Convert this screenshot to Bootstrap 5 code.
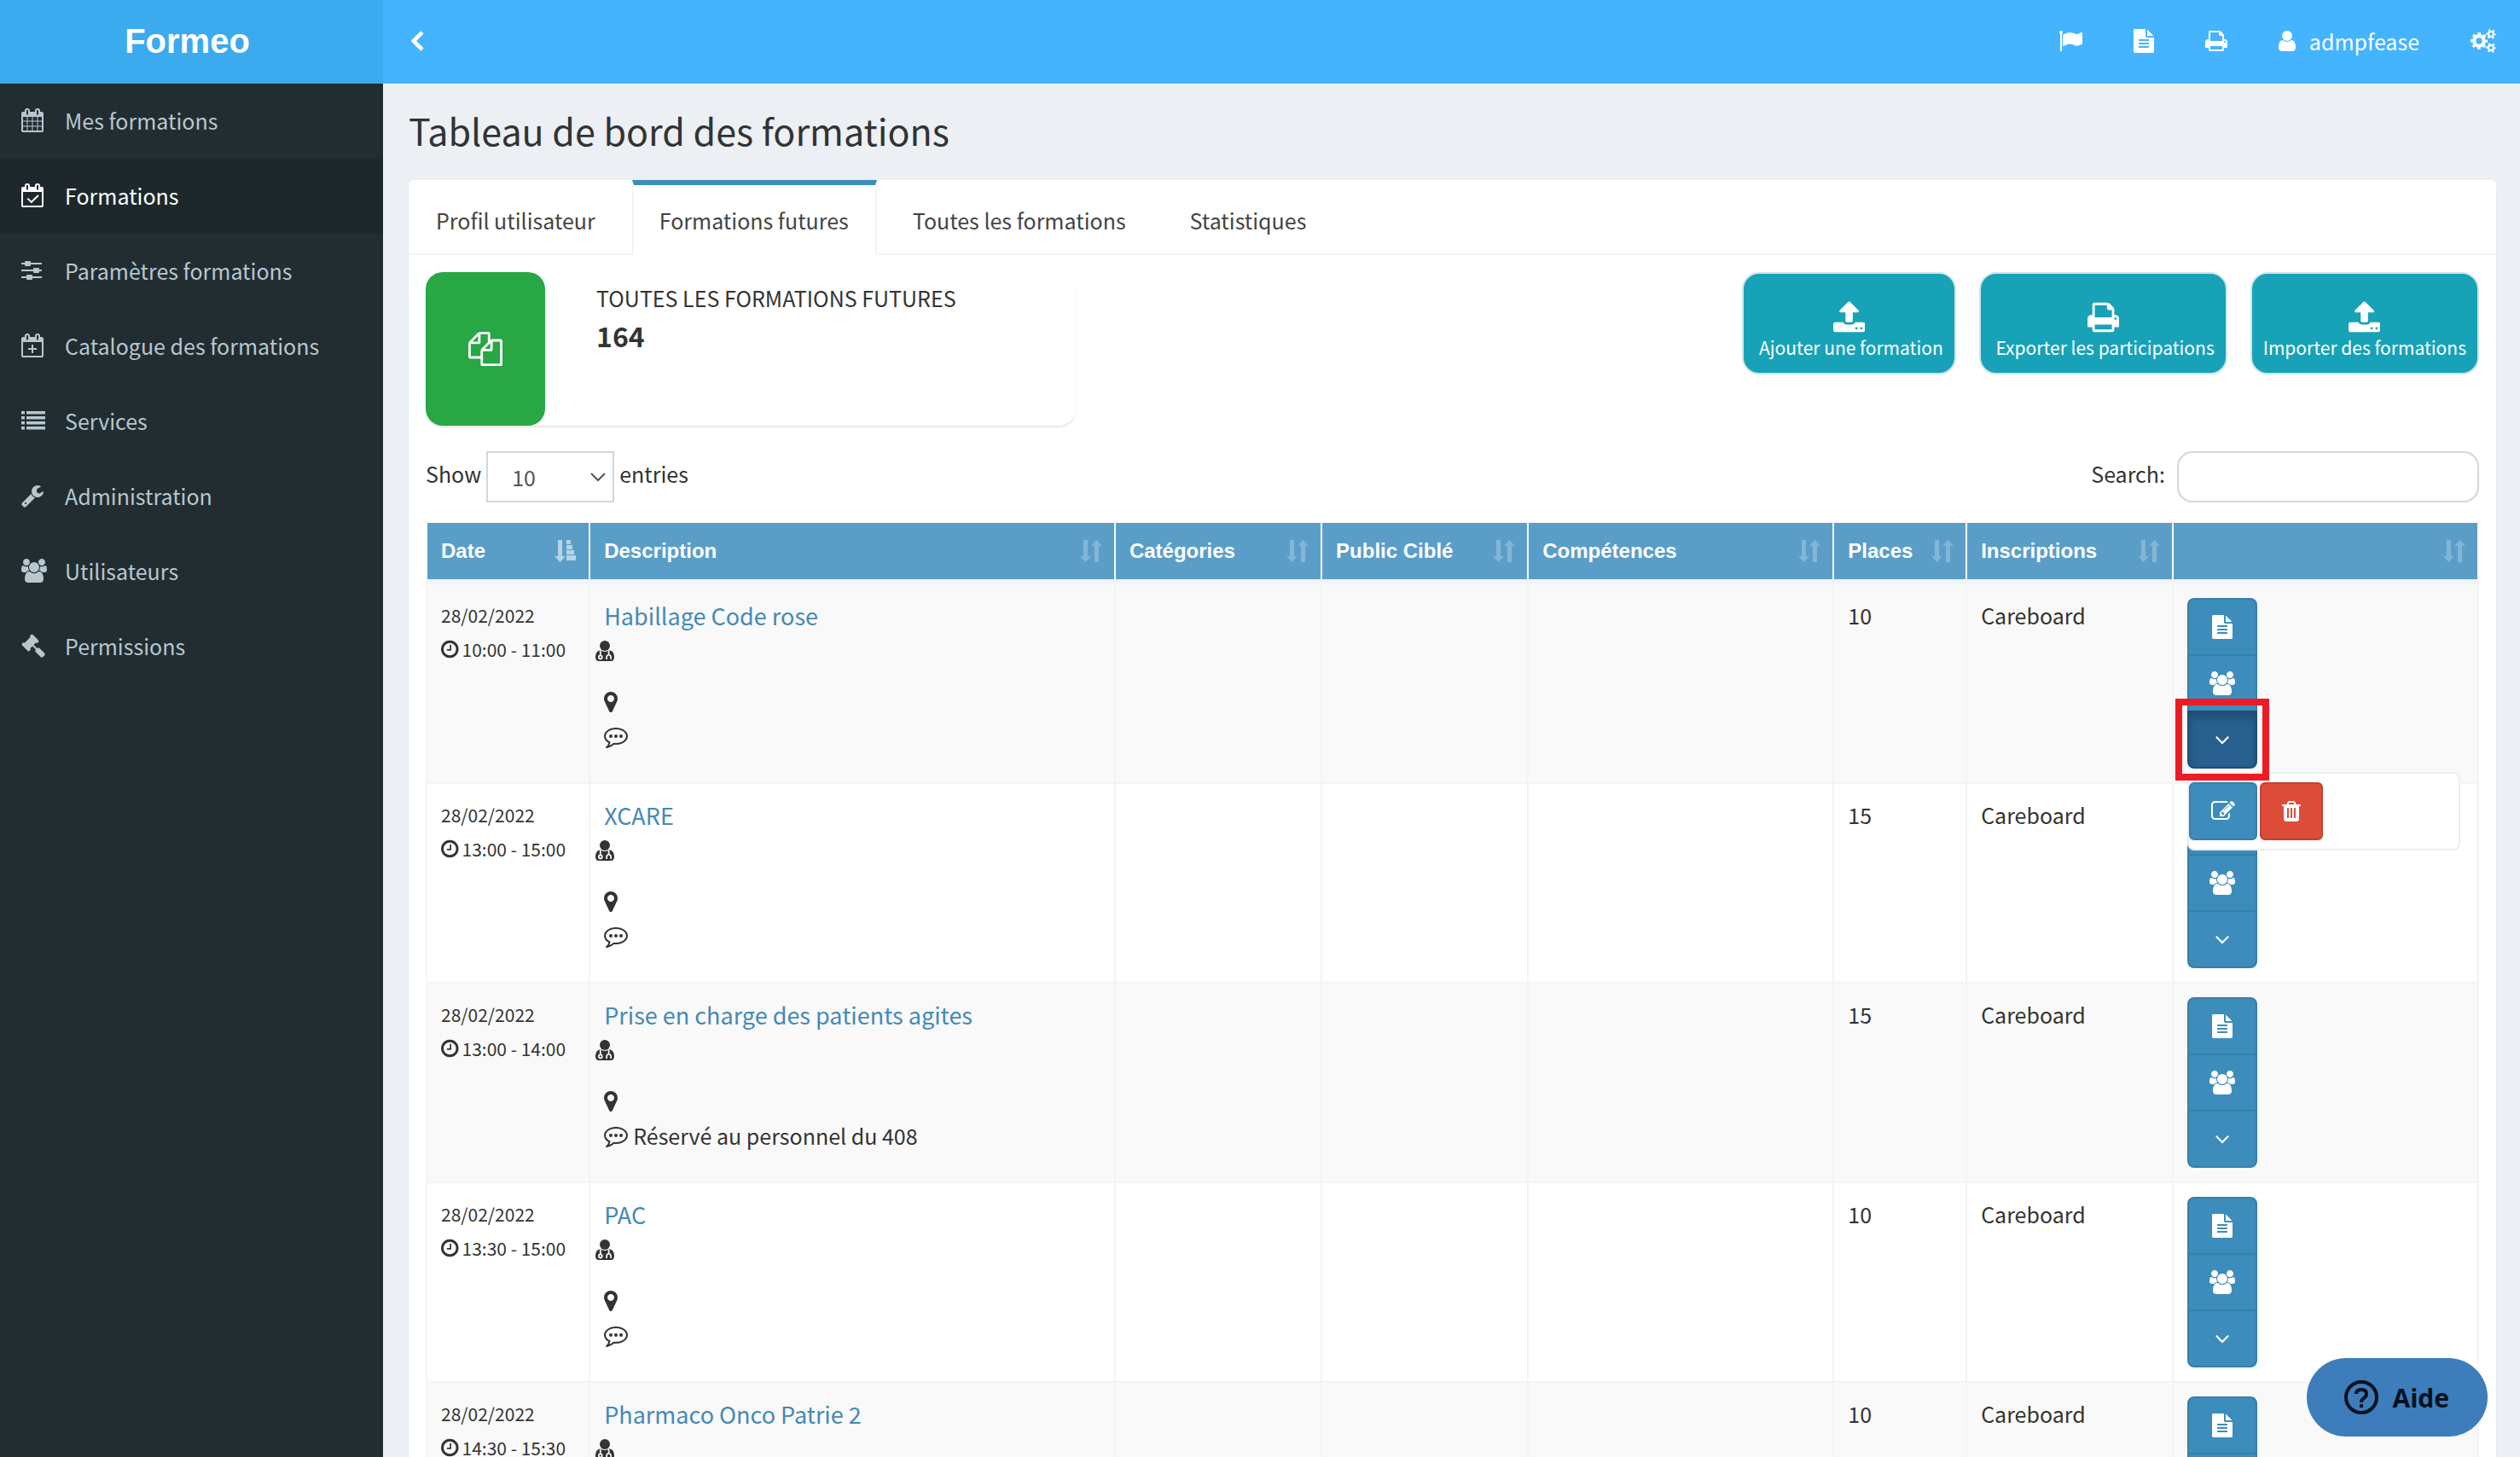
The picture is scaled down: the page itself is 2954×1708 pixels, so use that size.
<!DOCTYPE html>
<html lang="fr">
<head>
  <meta charset="UTF-8">
  <title>Formeo – Tableau de bord des formations</title>
  <meta name="viewport" content="width=device-width, initial-scale=1">
  <link href="https://cdn.jsdelivr.net/npm/bootstrap@5.3.0/dist/css/bootstrap.min.css" rel="stylesheet">
  <style>
    body {
      font-family: "Noto Sans CJK SC", "Open Sans", sans-serif;
      font-size: 25px;
      line-height: 40px;
      color: #333;
      background-color: #ecf0f5;
    }
    a { text-decoration: none; }
    .fa {
      height: 28px;
      width: auto;
      fill: currentColor;
      flex: none;
      display: block;
    }
    .fa-sm { height: 24px; }
    .fa-lg { height: 40px; }

    /* top bar */
    .topbar {
      height: 98px;
      padding-bottom: 2px;
      background: #44b4ff;
    }
    .brand-box {
      width: 449px;
      height: 98px;
      margin-bottom: -2px;
      padding: 0 10px 2px 0;
      background: #3caaef;
      font: bold 40px "Liberation Sans", sans-serif;
    }
    .top-links {
      gap: 60px;
      padding-right: 28px;
    }
    .top-links a, .toggle-btn { color: #fff; }
    .toggle-btn {
      margin-left: 33px;
      background: none;
      border: 0;
      padding: 0;
    }

    /* sidebar */
    .sidebar {
      width: 449px;
      background: #222d32;
    }
    .sidebar a {
      height: 88px;
      padding: 0 0 2px 25px;
      color: #b8c7ce;
    }
    .sidebar a.active {
      background: #1e282c;
      color: #fff;
    }
    .side-icon { width: 51px; }

    /* content */
    .content-area { padding: 24px 28px 0 30px; }
    h1 {
      font-size: 43px;
      line-height: 60px;
      font-weight: 400;
      margin-bottom: 29px;
    }
    .tab-box {
      background: #fff;
      border-radius: 6px;
      box-shadow: 0 2px 2px rgba(0,0,0,.1);
    }
    .tab-links {
      gap: 10px;
      border-bottom: 2px solid #f4f4f4;
      --bs-nav-tabs-border-radius: 0;
    }
    .tab-links .nav-link {
      padding: 21px 31px 0 30px;
      border: solid transparent;
      border-width: 6px 2px 2px;
      margin-bottom: -2px;
      color: #444;
      height: 88px;
    }
    .tab-links .nav-link.active {
      border-color: #3c8dbc #f4f4f4 #fff;
      color: #444;
    }
    .tab-body { padding: 20px; }
    .info-row { --bs-gutter-x: 60px; margin-bottom: 30px; }
    .info-tile {
      height: 180px;
      border-radius: 20px;
      box-shadow: 0 2px 2px rgba(0,0,0,.1);
    }
    .info-icon {
      width: 140px;
      border-radius: 20px;
      background: #28a745;
      color: #fff;
    }
    .info-text { padding: 10px 60px; }
    .info-number {
      font-size: 32px;
      line-height: 48px;
      font-weight: 700;
    }
    .app-buttons { gap: 27px; }
    .btn-app {
      height: 120px;
      padding: 16px 13px 0;
      border: 2px solid #cfe6ea;
      border-radius: 20px;
      background: #17a2b8;
      color: #fff;
      font-size: 21px;
      line-height: 30px;
    }
    .btn-app:hover { background: #138496; color: #fff; }

    /* table controls */
    .controls { margin-bottom: 22px; }
    .length-box { gap: 6px; }
    .search-box { gap: 14px; }
    .controls label { line-height: 52px; }
    .controls .form-select, .controls .form-control {
      height: 60px;
      border: 2px solid #d2d6de;
      font-size: 25px;
      line-height: 40px;
    }
    .controls .form-select {
      width: 150px;
      border-radius: 0;
      padding: 8px 28px;
      color: #555;
      background-image: url("data:image/svg+xml,%3csvg xmlns='http://www.w3.org/2000/svg' viewBox='0 0 22 22'%3e%3cpath fill='none' stroke='%23555' stroke-width='2' d='M3 7l8 8 8-8'/%3e%3c/svg%3e");
      background-position: right 6px center;
      background-size: 22px;
    }
    .controls .form-control {
      width: 354px;
      border-radius: 18px;
    }

    /* table */
    .training-table {
      table-layout: fixed;
      margin: 0;
      color: #333;
    }
    .training-table > thead > tr > th {
      height: 70px;
      padding: 0 14px 0 16px;
      border: 2px solid #f8fbfd;
      border-bottom: 6px solid #eff5f9;
      background: #5a9ec8;
      color: #fff;
      font: bold 24px "Liberation Sans", sans-serif;
      vertical-align: middle;
    }
    .training-table > tbody > tr > td {
      padding: 16px;
      border: 2px solid #f4f4f4;
      background: #fff;
      color: #333;
      box-shadow: none;
    }
    .training-table > tbody > tr:nth-child(odd) > td { background: #f9f9f9; }
    .training-table .cell-date { font-size: 21px; }
    .sort-icon { height: 26px; opacity: .25; }
    .sort-icon.sorted { opacity: .55; }
    .training-title {
      font-size: 27px;
      line-height: 42px;
      color: #4489b7;
      display: block;
    }
    .desc-line {
      height: 40px;
      gap: 6px;
    }
    .doctor-line {
      margin-left: -10px;
      margin-bottom: 20px;
    }

    .stack-group { width: 82px; }
    .btn-flat {
      height: 68px;
      padding: 0;
      border: 2px solid #367fa9;
      border-radius: 6px;
      background: #3c8dbc;
      color: #fff;
      display: flex;
      align-items: center;
      justify-content: center;
    }
    .btn-flat:hover { background: #367fa9; color: #fff; }
    .stack-group > .btn-flat { width: 82px; flex: none; }
    .stack-group > .btn-flat + .btn-flat, .stack-group > .marked { margin-top: -2px; }
    .stack-group > .btn-flat:first-child { border-radius: 8px 8px 0 0; }
    .stack-group > .btn-flat:nth-child(2) { border-radius: 0; }
    .stack-group > .btn-flat.last-btn { border-radius: 0 0 8px 8px; }
    .marked { z-index: 5; }
    .marked .btn-flat {
      width: 82px;
      border-radius: 0 0 8px 8px;
      border-color: #204d74;
      background: #286090;
      box-shadow: inset 0 6px 10px rgba(0,0,0,.2);
    }
    /* red frame round the open toggle */
    .marked::after {
      content: "";
      position: absolute;
      inset: -14px;
      border: 8px solid #ed1c24;
      pointer-events: none;
    }
    .row-menu {
      position: absolute;
      top: 72px;
      left: 0;
      z-index: -1;
      width: 320px;
      height: 92px;
      gap: 3px;
      padding: 10px 0;
      border: 2px solid #eee;
      border-radius: 8px;
      background: #fff;
    }
    .row-menu .btn-flat { width: 80px; border-radius: 6px; background: #3c8dbc; border-color: #367fa9; box-shadow: none; }
    .row-menu .btn-trash { width: 74px; background: #dd4b39; border-color: #c34335; }

    .help-btn {
      position: fixed;
      right: 38px;
      bottom: 24px;
      z-index: 10;
      height: 92px;
      padding: 0 45px 0 44px;
      gap: 16px;
      border: 0;
      border-radius: 46px;
      background: #3d7dbb;
      color: #03111f;
      font: bold 30px "Open Sans", sans-serif;
    }
  </style>
</head>
<body class="vh-100 overflow-hidden d-flex flex-column">

  <!-- Icônes -->
  <svg width="0" height="0" class="position-absolute" aria-hidden="true">
    <defs>
      <path id="i-flag" d="M320 256q0 72-64 110v1266q0 13-9.5 22.5t-22.5 9.5h-64q-13 0-22.5-9.5t-9.5-22.5v-1266q-64-38-64-110 0-53 37.500-90.500t90.500-37.500 90.500 37.500 37.500 90.500zm1472 64v763q0 25-12.500 38.500t-39.500 27.500q-215 116-369 116-61 0-123.500-22t-108.500-48-115.500-48-142.500-22q-192 0-464 146-17 9-33 9-26 0-45-19t-19-45v-742q0-32 31-55 21-14 79-43 236-120 421-120 107 0 200 29t219 88q38 19 88 19 54 0 117.500-21t110-47 88-47 54.500-21q26 0 45 19t19 45z"/>
      <path id="i-file" d="M1596 476q14 14 28 36h-472v-472q22 14 36 28zm-476 164h544v1056q0 40-28 68t-68 28h-1344q-40 0-68-28t-28-68v-1600q0-40 28-68t68-28h800v544q0 40 28 68t68 28zm160 736v-64q0-14-9-23t-23-9h-704q-14 0-23 9t-9 23v64q0 14 9 23t23 9h704q14 0 23-9t9-23zm0-256v-64q0-14-9-23t-23-9h-704q-14 0-23 9t-9 23v64q0 14 9 23t23 9h704q14 0 23-9t9-23zm0-256v-64q0-14-9-23t-23-9h-704q-14 0-23 9t-9 23v64q0 14 9 23t23 9h704q14 0 23-9t9-23z"/>
      <path id="i-print" d="M448 1536h896v-256h-896v256zm0-640h896v-384h-160q-40 0-68-28t-28-68v-160h-640v640zm1152 64q0-26-19-45t-45-19-45 19-19 45 19 45 45 19 45-19 19-45zm128 0v416q0 13-9.500 22.500t-22.500 9.500h-224v160q0 40-28 68t-68 28h-960q-40 0-68-28t-28-68v-160h-224q-13 0-22.500-9.500t-9.500-22.500v-416q0-79 56.500-135.500t135.500-56.500h64v-544q0-40 28-68t68-28h672q40 0 88 20t76 48l152 152q28 28 48 76t20 88v256h64q79 0 135.500 56.500t56.500 135.500z"/>
      <path id="i-user" d="M1536 1399q0 109-62.500 187t-150.500 78h-854q-88 0-150.500-78t-62.500-187q0-85 8.500-160.500t31.500-152 58.500-131 94-89 134.500-34.500q131 128 313 128t313-128q76 0 134.500 34.500t94 89 58.500 131 31.500 152 8.500 160.500zm-256-887q0 159-112.500 271.500t-271.500 112.500-271.500-112.500-112.500-271.500 112.500-271.500 271.500-112.500 271.500 112.500 112.500 271.500z"/>
      <g id="i-gears" fill="none" stroke="currentColor">
        <circle cx="640" cy="896" r="370" stroke-width="270"/>
        <circle cx="640" cy="896" r="560" stroke-width="170" stroke-dasharray="220 220" stroke-dashoffset="110"/>
        <circle cx="1536" cy="384" r="190" stroke-width="130"/>
        <circle cx="1536" cy="384" r="300" stroke-width="140" stroke-dasharray="150 164" stroke-dashoffset="75"/>
        <circle cx="1536" cy="1408" r="190" stroke-width="130"/>
        <circle cx="1536" cy="1408" r="300" stroke-width="140" stroke-dasharray="150 164" stroke-dashoffset="75"/>
      </g>
      <path id="i-chevron" d="M14 2L3 13 14 24" fill="none" stroke="currentColor" stroke-width="5"/>
      <path id="i-calendar" d="M192 1664h288v-288h-288v288zm352 0h320v-288h-320v288zm-352-352h288v-320h-288v320zm352 0h320v-320h-320v320zm-352-384h288v-288h-288v288zm736 736h320v-288h-320v288zm-384-736h320v-288h-320v288zm768 736h288v-288h-288v288zm-384-352h320v-320h-320v320zm-352-864v-288q0-13-9.500-22.500t-22.500-9.500h-64q-13 0-22.500 9.500t-9.500 22.500v288q0 13 9.500 22.500t22.500 9.500h64q13 0 22.500-9.500t9.500-22.500zm736 864h288v-320h-288v320zm-384-384h320v-288h-320v288zm384 0h288v-288h-288v288zm32-480v-288q0-13-9.500-22.500t-22.500-9.500h-64q-13 0-22.500 9.500t-9.500 22.500v288q0 13 9.500 22.500t22.500 9.500h64q13 0 22.500-9.500t9.500-22.500zm384-64v1280q0 52-38 90t-90 38h-1408q-52 0-90-38t-38-90v-1280q0-52 38-90t90-38h128v-96q0-66 47-113t113-47h64q66 0 113 47t47 113v96h384v-96q0-66 47-113t113-47h64q66 0 113 47t47 113v96h128q52 0 90 38t38 90z"/>
      <path id="i-cal-frame" d="M192 1664h1408v-1024h-1408v1024zm384-1216v-288q0-14-9-23t-23-9h-64q-14 0-23 9t-9 23v288q0 14 9 23t23 9h64q14 0 23-9t9-23zm768 0v-288q0-14-9-23t-23-9h-64q-14 0-23 9t-9 23v288q0 14 9 23t23 9h64q14 0 23-9t9-23zm384-64v1280q0 52-38 90t-90 38h-1408q-52 0-90-38t-38-90v-1280q0-52 38-90t90-38h128v-96q0-66 47-113t113-47h64q66 0 113 47t47 113v96h384v-96q0-66 47-113t113-47h64q66 0 113 47t47 113v96h128q52 0 90 38t38 90z"/>
      <g id="i-cal-check">
        <use href="#i-cal-frame"/>
        <path d="M530 1130l290 270 520-500" fill="none" stroke="currentColor" stroke-width="125"/>
      </g>
      <g id="i-cal-plus">
        <use href="#i-cal-frame"/>
        <path d="M896 832v640M576 1152h640" fill="none" stroke="currentColor" stroke-width="128"/>
      </g>
      <path id="i-sliders" d="M0 320h256v128H0zM704 320h832v128H704zM0 832h896v128H0zM1344 832h192v128h-192zM0 1344h384v128H0zM832 1344h704v128H832zM320 192h320q64 0 64 64v256q0 64-64 64H320q-64 0-64-64V256q0-64 64-64zM960 704h320q64 0 64 64v256q0 64-64 64H960q-64 0-64-64V768q0-64 64-64zM448 1216h320q64 0 64 64v256q0 64-64 64H448q-64 0-64-64v-256q0-64 64-64z"/>
      <path id="i-list" d="M0 192h256v224H0zM384 192h1408v224H384zM0 576h256v224H0zM384 576h1408v224H384zM0 960h256v224H0zM384 960h1408v224H384zM0 1344h256v224H0zM384 1344h1408v224H384z"/>
      <path id="i-wrench" d="M448 1472q0-26-19-45t-45-19-45 19-19 45 19 45 45 19 45-19 19-45zm644-420l-682 682q-37 37-90 37-52 0-91-37l-106-108q-38-36-38-90 0-53 38-91l681-681q39 98 114.500 173.500t173.500 114.500zm634-435q0 39-23 106-47 134-164.500 217.500t-258.500 83.500q-185 0-316.500-131.500t-131.500-316.500 131.500-316.500 316.500-131.500q58 0 121.500 16.500t107.500 46.500q16 11 16 28t-16 28l-293 169v224l193 107q5-3 79-48.500t135.500-81 70.500-35.500q15 0 23.500 10t8.500 25z"/>
      <path id="i-users" d="M593 896q-162 5-265 128h-134q-82 0-138-40.500t-56-118.500q0-353 124-353 6 0 43.500 21t97.500 42.500 119 21.500q67 0 133-23-5 37-5 66 0 139 81 256zm1071 637q0 120-73 189.500t-194 69.500h-874q-121 0-194-69.500t-73-189.500q0-53 3.500-103.500t14-109 26.500-108.500 43-97.500 62-81 85.500-53.500 111.500-20q10 0 43 21.500t73 48 107 48 135 21.500 135-21.500 107-48 73-48 43-21.500q61 0 111.500 20t85.500 53.500 62 81 43 97.500 26.500 108.500 14 109 3.500 103.500zm-1024-1277q0 106-75 181t-181 75-181-75-75-181 75-181 181-75 181 75 75 181zm704 384q0 159-112.500 271.500t-271.500 112.500-271.500-112.500-112.500-271.500 112.500-271.500 271.500-112.500 271.500 112.500 112.500 271.500zm576 225q0 78-56 118.500t-138 40.500h-134q-103-123-265-128 81-117 81-256 0-29-5-66 66 23 133 23 59 0 119-21.500t97.500-42.500 43.500-21q124 0 124 353zm-128-609q0 106-75 181t-181 75-181-75-75-181 75-181 181-75 181 75 75 181z"/>
      <path id="i-gavel" d="M1771 1536q0 53-37 90l-107 108q-39 37-91 37-53 0-90-37l-363-364q-38-36-38-90 0-53 43-96l-256-256-126 126q-14 14-34 14t-34-14q2 2 12.500 12t12.500 13 10 11.500 10 13.500 6 13.500 5.500 16.500 1.500 18q0 38-28 68-3 3-16.500 18t-19 20.500-18.500 16.500-22 15.500-22 9-26 4.500q-40 0-68-28l-408-408q-28-28-28-68 0-13 4.500-26t9-22 15.500-22 16.500-18.500 20.500-19 18-16.500q30-28 68-28 10 0 18 1.500t16.500 5.500 13.500 6 13.500 10 11.500 10 13 12.500 12 12.500q-14-14-14-34t14-34l348-348q14-14 34-14t34 14q-2-2-12.500-12t-12.500-13-10-11.500-10-13.500-6-13.500-5.500-16.500-1.500-18q0-38 28-68 3-3 16.500-18t19-20.500 18.500-16.500 22-15.500 22-9 26-4.500q40 0 68 28l408 408q28 28 28 68 0 13-4.500 26t-9 22-15.500 22-16.500 18.500-20.500 19-18 16.500q-30 28-68 28-10 0-18-1.500t-16.500-5.500-13.500-6-13.500-10-11.500-10-13-12.500-12-12.500q14 14 14 34t-14 34l-126 126 256 256q43-43 96-43 52 0 91 37l363 363q37 39 37 91z"/>
      <path id="i-files" d="M1696 384q40 0 68 28t28 68v1216q0 40-28 68t-68 28h-960q-40 0-68-28t-28-68v-288h-544q-40 0-68-28t-28-68v-672q0-40 20-88t48-76l408-408q28-28 76-48t88-20h416q40 0 68 28t28 68v328q68-40 128-40h416zm-544 213l-299 299h299v-299zm-640-384l-299 299h299v-299zm196 647l316-316v-416h-384v416q0 40-28 68t-68 28h-416v640h512v-256q0-40 20-88t48-76zm956 804v-1152h-384v416q0 40-28 68t-68 28h-416v640h896z"/>
      <path id="i-upload" d="M1344 1472q0-26-19-45t-45-19-45 19-19 45 19 45 45 19 45-19 19-45zm256 0q0-26-19-45t-45-19-45 19-19 45 19 45 45 19 45-19 19-45zm128-224v320q0 40-28 68t-68 28h-1472q-40 0-68-28t-28-68v-320q0-40 28-68t68-28h427q21 56 70.500 92t110.500 36h256q61 0 110.500-36t70.500-92h427q40 0 68 28t28 68zm-325-648q-17 40-59 40h-256v448q0 26-19 45t-45 19h-256q-26 0-45-19t-19-45v-448h-256q-42 0-59-40-17-39 14-69l448-448q18-19 45-19t45 19l448 448q31 30 14 69z"/>
      <path id="i-clock" d="M1024 544v448q0 14-9 23t-23 9h-320q-14 0-23-9t-9-23v-64q0-14 9-23t23-9h224v-352q0-14 9-23t23-9h64q14 0 23 9t9 23zm416 352q0-148-73-273t-198-198-273-73-273 73-198 198-73 273 73 273 198 198 273 73 273-73 198-198 73-273zm224 0q0 209-103 385.500t-279.500 279.500-385.500 103-385.500-103-279.500-279.500-103-385.500 103-385.500 279.500-279.500 385.500-103 385.500 103 279.500 279.500 103 385.500z"/>
      <path id="i-marker" d="M1152 640q0-106-75-181t-181-75-181 75-75 181 75 181 181 75 181-75 75-181zm256 0q0 109-33 179l-364 774q-16 33-47.500 52t-67.500 19-67.500-19-46.500-52l-365-774q-33-70-33-179 0-212 150-362t362-150 362 150 150 362z"/>
      <g id="i-comment">
        <circle cx="512" cy="896" r="128"/><circle cx="896" cy="896" r="128"/><circle cx="1280" cy="896" r="128"/>
        <path d="M896 384q-204 0-381.500 69.500t-282 187.500-104.500 255q0 112 71.500 213.500t201.500 175.500l87 50-27 96q-24 91-70 172 152-63 275-171l43-38 57 6q69 8 130 8 204 0 381.500-69.500t282-187.500 104.500-255-104.500-255-282-187.500-381.500-69.500zm896 512q0 174-120 321.500t-326 233-450 85.500q-70 0-145-8-198 175-460 242-49 14-114 22h-5q-15 0-27-10.500t-16-27.500v-1q-3-4-.5-12t2-10 4.500-9.500l6-9 7-8.500 8-9q7-8 31-34.500t34.500-38 31-39.500 32.500-51 27-59 26-76q-157-89-247.500-220t-90.500-281q0-130 71-248.500t191-204.500 286-136.500 348-50.500 348 50.500 286 136.500 191 204.500 71 248.500z"/>
      </g>
      <mask id="doctor-mask" maskUnits="userSpaceOnUse" x="0" y="0" width="1408" height="1792">
        <rect width="1408" height="1792" fill="#fff"/>
        <g fill="none" stroke="#000" stroke-width="110">
          <path d="M370 860v390M840 1540v-150q0-190 160-190t160 190v150M1000 860v340"/>
          <circle cx="370" cy="1370" r="125"/>
        </g>
      </mask>
      <g id="i-doctor">
        <circle cx="704" cy="512" r="384"/>
        <path mask="url(#doctor-mask)" d="M370 845q140 115 334 115t334-115q370 60 370 520 0 299-250 299H250q-250 0-250-299 0-460 370-520z"/>
      </g>
      <path id="i-down" d="M1395 736q0 13-10 23l-466 466q-10 10-23 10t-23-10l-466-466q-10-10-10-23t10-23l50-50q10-10 23-10t23 10l393 393 393-393q10-10 23-10t23 10l50 50q10 10 10 23z"/>
      <path id="i-edit" d="M888 1184l116-116-152-152-116 116v56h96v96h56zm440-720q-16-16-33 1l-350 350q-17 17-1 33t33-1l350-350q17-17 1-33zm80 594v190q0 119-84.500 203.500t-203.500 84.500h-832q-119 0-203.500-84.500t-84.500-203.500v-832q0-119 84.500-203.500t203.500-84.500h832q63 0 117 25 15 7 18 23 3 17-9 29l-49 49q-14 14-32 8-23-6-45-6h-832q-66 0-113 47t-47 113v832q0 66 47 113t113 47h832q66 0 113-47t47-113v-126q0-13 9-22l64-64q15-15 35-7t20 29zm-96-738l288 288-672 672h-288v-288zm444 132l-92 92-288-288 92-92q28-28 68-28t68 28l152 152q28 28 28 68t-28 68z"/>
      <path id="i-trash" d="M704 1376v-704q0-14-9-23t-23-9h-64q-14 0-23 9t-9 23v704q0 14 9 23t23 9h64q14 0 23-9t9-23zm256 0v-704q0-14-9-23t-23-9h-64q-14 0-23 9t-9 23v704q0 14 9 23t23 9h64q14 0 23-9t9-23zm256 0v-704q0-14-9-23t-23-9h-64q-14 0-23 9t-9 23v704q0 14 9 23t23 9h64q14 0 23-9t9-23zm-544-992h448l-48-117q-7-9-17-11h-317q-10 2-17 11zm928 32v64q0 14-9 23t-23 9h-96v948q0 83-47 143.500t-113 60.500h-832q-66 0-113-58.500t-47-141.500v-952h-96q-14 0-23-9t-9-23v-64q0-14 9-23t23-9h309l70-167q15-37 54-63t79-26h320q40 0 79 26t54 63l70 167h309q14 0 23 9t9 23z"/>
      <path id="i-sort" d="M4 0h5v19h4l-6.500 7L0 19h4zM17 26h5V7h4l-6.500-7L13 7h4z"/>
      <path id="i-sorted" d="M4 0h5v19h4l-6.500 7L0 19h4zM14 0h5v5h-5zM14 6h7v5h-7zM14 12h9v5h-9zM14 18h11v6H14z"/>
    </defs>
  </svg>

  <!-- Barre du haut -->
  <header class="topbar d-flex align-items-center flex-shrink-0">
    <a href="#" class="brand-box d-flex align-items-center justify-content-center text-white">Formeo</a>
    <button type="button" class="toggle-btn" aria-label="Réduire le menu">
      <svg class="fa fa-sm" viewBox="0 0 17 26"><use href="#i-chevron"/></svg>
    </button>
    <nav class="top-links d-flex align-items-center ms-auto">
      <a href="#" aria-label="Signalements"><svg class="fa" viewBox="0 0 1792 1792"><use href="#i-flag"/></svg></a>
      <a href="#" aria-label="Documents"><svg class="fa" viewBox="128 0 1536 1792"><use href="#i-file"/></svg></a>
      <a href="#" aria-label="Imprimer"><svg class="fa" viewBox="64 0 1664 1792"><use href="#i-print"/></svg></a>
      <a href="#" class="d-flex align-items-center gap-3"><svg class="fa" viewBox="256 0 1280 1792"><use href="#i-user"/></svg>admpfease</a>
      <a href="#" aria-label="Paramètres"><svg class="fa" viewBox="0 0 1920 1792"><use href="#i-gears"/></svg></a>
    </nav>
  </header>

  <div class="d-flex flex-grow-1 overflow-hidden">

    <!-- Menu -->
    <nav class="sidebar flex-shrink-0">
      <a href="#" class="d-flex align-items-center"><span class="side-icon"><svg class="fa" viewBox="64 0 1664 1792"><use href="#i-calendar"/></svg></span>Mes formations</a>
      <a href="#" class="d-flex align-items-center active"><span class="side-icon"><svg class="fa" viewBox="64 0 1664 1792"><use href="#i-cal-check"/></svg></span>Formations</a>
      <a href="#" class="d-flex align-items-center"><span class="side-icon"><svg class="fa" viewBox="0 0 1536 1792"><use href="#i-sliders"/></svg></span>Paramètres formations</a>
      <a href="#" class="d-flex align-items-center"><span class="side-icon"><svg class="fa" viewBox="64 0 1664 1792"><use href="#i-cal-plus"/></svg></span>Catalogue des formations</a>
      <a href="#" class="d-flex align-items-center"><span class="side-icon"><svg class="fa" viewBox="0 0 1792 1792"><use href="#i-list"/></svg></span>Services</a>
      <a href="#" class="d-flex align-items-center"><span class="side-icon"><svg class="fa" viewBox="64 0 1664 1792"><use href="#i-wrench"/></svg></span>Administration</a>
      <a href="#" class="d-flex align-items-center"><span class="side-icon"><svg class="fa" viewBox="0 0 1920 1792"><use href="#i-users"/></svg></span>Utilisateurs</a>
      <a href="#" class="d-flex align-items-center"><span class="side-icon"><svg class="fa" viewBox="0 0 1792 1792"><use href="#i-gavel"/></svg></span>Permissions</a>
    </nav>

    <!-- Contenu -->
    <main class="content-area flex-grow-1">
      <h1>Tableau de bord des formations</h1>

      <div class="tab-box">
        <ul class="nav nav-tabs tab-links">
          <li class="nav-item"><a class="nav-link" href="#">Profil utilisateur</a></li>
          <li class="nav-item"><a class="nav-link active" href="#">Formations futures</a></li>
          <li class="nav-item"><a class="nav-link" href="#">Toutes les formations</a></li>
          <li class="nav-item"><a class="nav-link" href="#">Statistiques</a></li>
        </ul>

        <div class="tab-body">
          <div class="row info-row">
            <div class="col-4">
              <div class="info-tile d-flex">
                <div class="info-icon d-flex align-items-center justify-content-center flex-shrink-0">
                  <svg class="fa fa-lg" viewBox="0 0 1792 1792"><use href="#i-files"/></svg>
                </div>
                <div class="info-text">
                  <div>TOUTES LES FORMATIONS FUTURES</div>
                  <div class="info-number">164</div>
                </div>
              </div>
            </div>
            <div class="col-8 app-buttons d-flex justify-content-end align-items-start">
              <button type="button" class="btn btn-app"><svg class="fa fa-lg mx-auto" viewBox="64 0 1664 1792"><use href="#i-upload"/></svg>&nbsp;Ajouter une formation</button>
              <button type="button" class="btn btn-app"><svg class="fa fa-lg mx-auto" viewBox="64 0 1664 1792"><use href="#i-print"/></svg>&nbsp;Exporter les participations</button>
              <button type="button" class="btn btn-app"><svg class="fa fa-lg mx-auto" viewBox="64 0 1664 1792"><use href="#i-upload"/></svg>Importer des formations</button>
            </div>
          </div>

          <div class="controls d-flex justify-content-between">
            <div class="length-box d-flex align-items-start">
              <label for="pageLength">Show</label>
              <select id="pageLength" class="form-select">
                <option>10</option>
                <option>25</option>
                <option>50</option>
              </select>
              <label for="pageLength">entries</label>
            </div>
            <div class="search-box d-flex align-items-start">
              <label for="searchInput">Search:</label>
              <input type="search" id="searchInput" class="form-control">
            </div>
          </div>

          <table class="table training-table">
            <colgroup id="tableCols"></colgroup>
            <thead><tr id="tableHead"></tr></thead>
            <tbody id="tableBody"></tbody>
          </table>
        </div>
      </div>
    </main>
  </div>

  <button type="button" class="help-btn d-flex align-items-center">
    <svg width="40" height="40" viewBox="0 0 40 40" fill="none" stroke="currentColor" stroke-width="4">
      <circle cx="20" cy="20" r="18"/>
      <path d="M14 16q0-5 6-5t6 5q0 3-3 5t-3 5"/>
      <path d="M20 28v4"/>
    </svg>
    Aide
  </button>

  <script>
    const columns = [
      { label: 'Date', width: 7.95 },
      { label: 'Description', width: 25.6 },
      { label: 'Catégories', width: 10.07 },
      { label: 'Public Ciblé', width: 10.07 },
      { label: 'Compétences', width: 14.89 },
      { label: 'Places', width: 6.48 },
      { label: 'Inscriptions', width: 10.07 },
      { label: '', width: 14.87 }
    ];

    const trainings = [
      { date: '28/02/2022', time: '10:00 - 11:00', title: 'Habillage Code rose', note: '', places: 10, open: true },
      { date: '28/02/2022', time: '13:00 - 15:00', title: 'XCARE', note: '', places: 15 },
      { date: '28/02/2022', time: '13:00 - 14:00', title: 'Prise en charge des patients agites', note: 'Réservé au personnel du 408', places: 15 },
      { date: '28/02/2022', time: '13:30 - 15:00', title: 'PAC', note: '', places: 10 },
      { date: '28/02/2022', time: '14:30 - 15:30', title: 'Pharmaco Onco Patrie 2', note: '', places: 10 }
    ];

    function icon(name, box, cls = '') {
      return `<svg class="fa ${cls}" viewBox="${box}"><use href="#i-${name}"/></svg>`;
    }

    function toggleButton(open) {
      const arrow = icon('down', '320 0 1152 1792');
      if (!open) {
        return `<button type="button" class="btn btn-flat last-btn" aria-label="Plus d'actions">${arrow}</button>`;
      }
      return `<div class="marked position-relative">
        <button type="button" class="btn btn-flat" aria-label="Plus d'actions" aria-expanded="true">${arrow}</button>
        <div class="row-menu d-flex">
          <button type="button" class="btn btn-flat" aria-label="Modifier">${icon('edit', '0 0 1792 1792')}</button>
          <button type="button" class="btn btn-flat btn-trash" aria-label="Supprimer">${icon('trash', '192 0 1408 1792')}</button>
        </div>
      </div>`;
    }

    document.getElementById('tableCols').innerHTML = columns.map(c => `<col style="width: ${c.width}%">`).join('');

    document.getElementById('tableHead').innerHTML = columns.map((c, i) => `
      <th scope="col">
        <div class="d-flex align-items-center justify-content-between">
          <span>${c.label}</span>
          ${icon(i === 0 ? 'sorted' : 'sort', '0 0 26 26', 'sort-icon' + (i === 0 ? ' sorted' : ''))}
        </div>
      </th>`).join('');

    document.getElementById('tableBody').innerHTML = trainings.map(t => `
      <tr>
        <td class="cell-date">
          <div>${t.date}</div>
          <div class="d-flex align-items-center gap-1">${icon('clock', '128 0 1536 1792', 'fa-sm')}${t.time}</div>
        </td>
        <td>
          <a href="#" class="training-title">${t.title}</a>
          <div class="desc-line doctor-line d-flex align-items-center">${icon('doctor', '0 0 1408 1792')}</div>
          <div class="desc-line d-flex align-items-center">${icon('marker', '384 0 1024 1792')}</div>
          <div class="desc-line d-flex align-items-center">${icon('comment', '0 0 1792 1792')}${t.note}</div>
        </td>
        <td></td>
        <td></td>
        <td></td>
        <td>${t.places}</td>
        <td>Careboard</td>
        <td>
          <div class="stack-group d-flex flex-column">
            <button type="button" class="btn btn-flat" aria-label="Détails">${icon('file', '128 0 1536 1792')}</button>
            <button type="button" class="btn btn-flat" aria-label="Participants">${icon('users', '0 0 1920 1792')}</button>
            ${toggleButton(t.open)}
          </div>
        </td>
      </tr>`).join('');
  </script>
  <script src="https://cdn.jsdelivr.net/npm/bootstrap@5.3.0/dist/js/bootstrap.bundle.min.js"></script>
</body>
</html>
